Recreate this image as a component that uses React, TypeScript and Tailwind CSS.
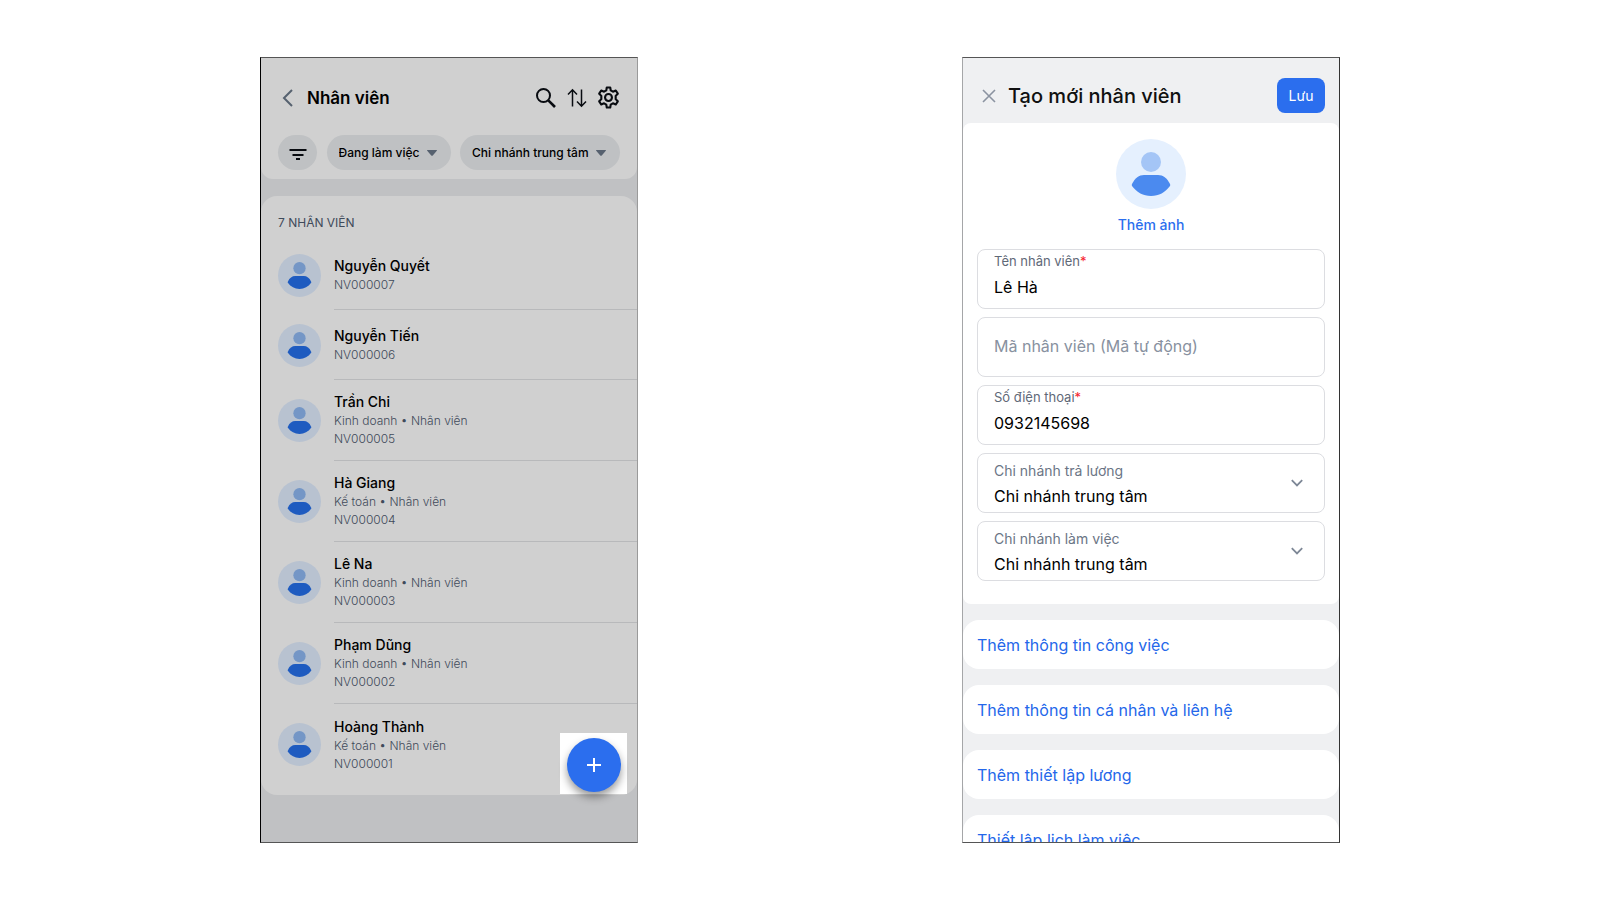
import React from "react";

interface Employee {
  name: string;
  code: string;
  position?: string;
}

const employees: Employee[] = [
  { name: "Nguyễn Quyết", code: "NV000007" },
  { name: "Nguyễn Tiến", code: "NV000006" },
  { name: "Trần Chi", code: "NV000005", position: "Kinh doanh • Nhân viên" },
  { name: "Hà Giang", code: "NV000004", position: "Kế toán • Nhân viên" },
  { name: "Lê Na", code: "NV000003", position: "Kinh doanh • Nhân viên" },
  { name: "Phạm Dũng", code: "NV000002", position: "Kinh doanh • Nhân viên" },
  { name: "Hoàng Thành", code: "NV000001", position: "Kế toán • Nhân viên" },
];

const sections = [
  "Thêm thông tin công việc",
  "Thêm thông tin cá nhân và liên hệ",
  "Thêm thiết lập lương",
  "Thiết lập lịch làm việc",
];

interface AvatarProps {
  className: string;
  circle: string;
  head: string;
  body: string;
}

const Avatar: React.FC<AvatarProps> = ({ className, circle, head, body }) => (
  <svg className={className} viewBox="0 0 70 70" aria-hidden="true">
    <circle cx="35" cy="35" r="35" fill={circle} />
    <circle cx="35" cy="23" r="10" fill={head} />
    <path
      fill={body}
      d="M28 36H42C47 36 51 39 54 45Q54.500 46 54 47C49 53.500 43 57 35 57C27 57 21 53.500 16 47Q15.500 46 16 45C19 39 23 36 28 36Z"
    />
  </svg>
);

const FilterChip: React.FC<{ label: string; value: string }> = ({ label, value }) => (
  <div className="flex h-[35px] items-center gap-[7px] rounded-full bg-[#bfc1c3] pr-[14px] pl-3">
    <select
      aria-label={label}
      className="appearance-none bg-transparent text-[12px] leading-4 font-medium text-black outline-none"
    >
      <option>{value}</option>
    </select>
    <svg className="h-[6px] w-[10px]" viewBox="0 0 10 6" fill="#56616f" aria-hidden="true">
      <path d="M0.500 0H9.500Q10.300 0 9.800 0.800L6 5.200Q5 6.200 4 5.200L0.200 0.800Q-0.300 0 0.500 0Z" />
    </svg>
  </div>
);

const EmployeeRow: React.FC<{ employee: Employee; last: boolean }> = ({ employee, last }) => (
  <li className="flex items-stretch gap-[13px] pl-[17px]">
    <Avatar
      className="size-[43px] shrink-0 self-center"
      circle="#b8c2d0"
      head="#7496c6"
      body="#1e5bc0"
    />
    <div
      className={`flex flex-1 flex-col justify-center ${employee.position ? "h-[81px]" : "h-[70px]"} ${
        last ? "" : "border-b border-[#b8b9bb]"
      }`}
    >
      <p className="text-[14px] leading-5 font-medium text-black">{employee.name}</p>
      {employee.position && (
        <p className="text-[12px] leading-[18px] font-light text-[#3f4a5a]">{employee.position}</p>
      )}
      <p className="text-[12px] leading-[18px] font-light text-[#3f4a5a]">{employee.code}</p>
    </div>
  </li>
);

const EmployeeList: React.FC = () => (
  <section className="relative h-[786px] w-full max-w-[378px] overflow-hidden border border-[#555555] border-r-[#9a9a9a] border-l-black bg-[#c0c1c3]">
    <header className="rounded-b-xl bg-[#d0d0d0] px-[17px] pt-[22px] pb-[9px]">
      <div className="flex h-[35px] items-center">
        <button type="button" aria-label="Quay lại" className="ml-1">
          <svg className="h-5 w-3" viewBox="0 0 12 20" fill="none" stroke="#56616f" strokeWidth="2">
            <path d="M10 2L2 10L10 18" />
          </svg>
        </button>
        <h1 className="ml-[13px] flex-1 text-[17px] leading-6 font-semibold text-black">Nhân viên</h1>
        <div className="flex items-center gap-[10px]">
          <button type="button" aria-label="Tìm kiếm">
            <svg className="size-[22px]" viewBox="0 0 22 22" fill="none" stroke="#080b10">
              <circle cx="8.500" cy="8.500" r="6.500" strokeWidth="2" />
              <path d="M13.300 13.300L20 20" strokeWidth="2.600" />
            </svg>
          </button>
          <button type="button" aria-label="Sắp xếp">
            <svg
              className="h-[22px] w-5"
              viewBox="0 0 20 22"
              fill="none"
              stroke="#080b10"
              strokeWidth="1.500"
            >
              <path d="M5.500 19.500V3M1 7.500L5.500 2.800L10 7.500" />
              <path d="M14.500 2.500V19M10 14.500L14.500 19.200L19 14.500" />
            </svg>
          </button>
          <button type="button" aria-label="Cài đặt">
            <svg
              className="size-[23px]"
              viewBox="0 0 24 24"
              fill="none"
              stroke="#080b10"
              strokeWidth="2.200"
              strokeLinejoin="round"
            >
              <path d="M10.200 1.500H13.800L14.300 4.600L16.600 5.900L19.600 4.700L21.700 8L19.500 10.300V13.700L21.700 16L19.600 19.300L16.600 18.100L14.300 19.400L13.800 22.500H10.200L9.700 19.400L7.400 18.100L4.400 19.300L2.300 16L4.500 13.700V10.300L2.300 8L4.400 4.700L7.400 5.900L9.700 4.600Z" />
              <circle cx="12" cy="12" r="3.600" />
            </svg>
          </button>
        </div>
      </div>
      <div className="mt-5 flex justify-between">
        <button
          type="button"
          aria-label="Bộ lọc"
          className="flex h-[35px] w-[39px] items-center justify-center rounded-full bg-[#bfc1c3]"
        >
          <svg className="h-[18px] w-[18px]" viewBox="0 0 18 18" stroke="#080b10" strokeWidth="2">
            <path d="M0.500 6H17.500M3.500 11H14.500M7 15H11" />
          </svg>
        </button>
        <FilterChip label="Trạng thái" value="Đang làm việc" />
        <FilterChip label="Chi nhánh" value="Chi nhánh trung tâm" />
      </div>
    </header>

    <div className="mt-[17px] rounded-2xl bg-[#d0d0d0] pt-[18px] pb-[10px]">
      <h2 className="mb-2 pl-[17px] text-[12px] leading-[18px] text-[#3f4a5a]">7 NHÂN VIÊN</h2>
      <ul>
        {employees.map((employee, index) => (
          <EmployeeRow
            key={employee.code}
            employee={employee}
            last={index === employees.length - 1}
          />
        ))}
      </ul>
    </div>

    <div className="absolute right-[10px] bottom-12 flex h-[61px] w-[67px] items-center justify-center bg-white pt-[2px]">
      <button
        type="button"
        aria-label="Thêm nhân viên"
        className="flex size-[54px] items-center justify-center rounded-full bg-[#2b6eee] shadow-[0_5px_8px_rgba(0,0,0,0.4)]"
      >
        <svg className="size-[14px]" viewBox="0 0 14 14" stroke="#ffffff" strokeWidth="2">
          <path d="M7 0V14M0 7H14" />
        </svg>
      </button>
    </div>
  </section>
);

interface FieldProps {
  id: string;
  label: string;
  value: string;
}

const TextField: React.FC<FieldProps> = ({ id, label, value }) => (
  <div className="flex h-[60px] flex-col rounded-lg border border-[#dcdde1] px-4 pt-[2px]">
    <label htmlFor={id} className="text-[13px] leading-[18px] text-[#5f6978]">
      {label}
      <span className="text-[#f5222d]">*</span>
    </label>
    <input
      id={id}
      defaultValue={value}
      className="mt-[5px] h-6 w-full bg-transparent text-[16px] leading-6 text-black outline-none"
    />
  </div>
);

const SelectField: React.FC<FieldProps> = ({ id, label, value }) => (
  <div className="flex h-[60px] items-center rounded-lg border border-[#dcdde1] pr-[21px] pl-4">
    <div className="flex flex-1 flex-col pt-1">
      <label htmlFor={id} className="text-[14px] leading-[18px] text-[#6b7585]">
        {label}
      </label>
      <select
        id={id}
        className="mt-1 h-6 w-full appearance-none bg-transparent text-[16px] leading-6 text-black outline-none"
      >
        <option>{value}</option>
      </select>
    </div>
    <svg className="h-2 w-3" viewBox="0 0 12 8" fill="none" stroke="#7d8796" strokeWidth="1.800">
      <path d="M0.800 1.200L6 6.400L11.200 1.200" />
    </svg>
  </div>
);

const EmployeeForm: React.FC = () => (
  <form className="h-[786px] w-full max-w-[378px] overflow-hidden border border-[#555555] border-r-[#333333] border-l-[#a5a6a8] bg-[#eff0f2]">
    <header className="flex items-center px-[14px] pt-5 pb-[10px]">
      <button type="button" aria-label="Đóng" className="ml-[5px]">
        <svg className="size-[14px]" viewBox="0 0 14 14" stroke="#8b93a1" strokeWidth="1.600">
          <path d="M1 1L13 13M13 1L1 13" />
        </svg>
      </button>
      <h1 className="ml-3 flex-1 text-[20px] leading-7 font-medium text-[#101010]">
        Tạo mới nhân viên
      </h1>
      <button
        type="button"
        className="h-[35px] w-12 rounded-lg bg-[#2b6eee] text-[14px] leading-5 text-white"
      >
        Lưu
      </button>
    </header>

    <div className="flex flex-col rounded-lg bg-white px-[14px] pt-4 pb-[23px]">
      <Avatar
        className="size-[70px] self-center"
        circle="#e5f0fe"
        head="#a4c5f6"
        body="#4b8aef"
      />
      <button
        type="button"
        className="mt-[6px] mb-[14px] self-center text-[14px] leading-5 font-medium text-[#2b6eee]"
      >
        Thêm ảnh
      </button>
      <div className="flex flex-col gap-2">
        <TextField id="name" label="Tên nhân viên" value="Lê Hà" />
        <input
          aria-label="Mã nhân viên"
          placeholder="Mã nhân viên (Mã tự động)"
          className="h-[60px] rounded-lg border border-[#dcdde1] px-4 pb-[2px] text-[16px] leading-6 outline-none placeholder:text-[#8891a0]"
        />
        <TextField id="phone" label="Số điện thoại" value="0932145698" />
        <SelectField id="pay-branch" label="Chi nhánh trả lương" value="Chi nhánh trung tâm" />
        <SelectField id="work-branch" label="Chi nhánh làm việc" value="Chi nhánh trung tâm" />
      </div>
    </div>

    {sections.map((section) => (
      <button
        key={section}
        type="button"
        className="mt-4 block h-[49px] w-full rounded-2xl bg-white px-[14px] text-left text-[16px] leading-6 text-[#2467ea]"
      >
        {section}
      </button>
    ))}
  </form>
);

const App: React.FC = () => {
  return (
    <main className="flex min-h-screen items-center justify-between gap-8 bg-white px-[16.25vw] font-['Inter',sans-serif]">
      <EmployeeList />
      <EmployeeForm />
    </main>
  );
};

export default App;
